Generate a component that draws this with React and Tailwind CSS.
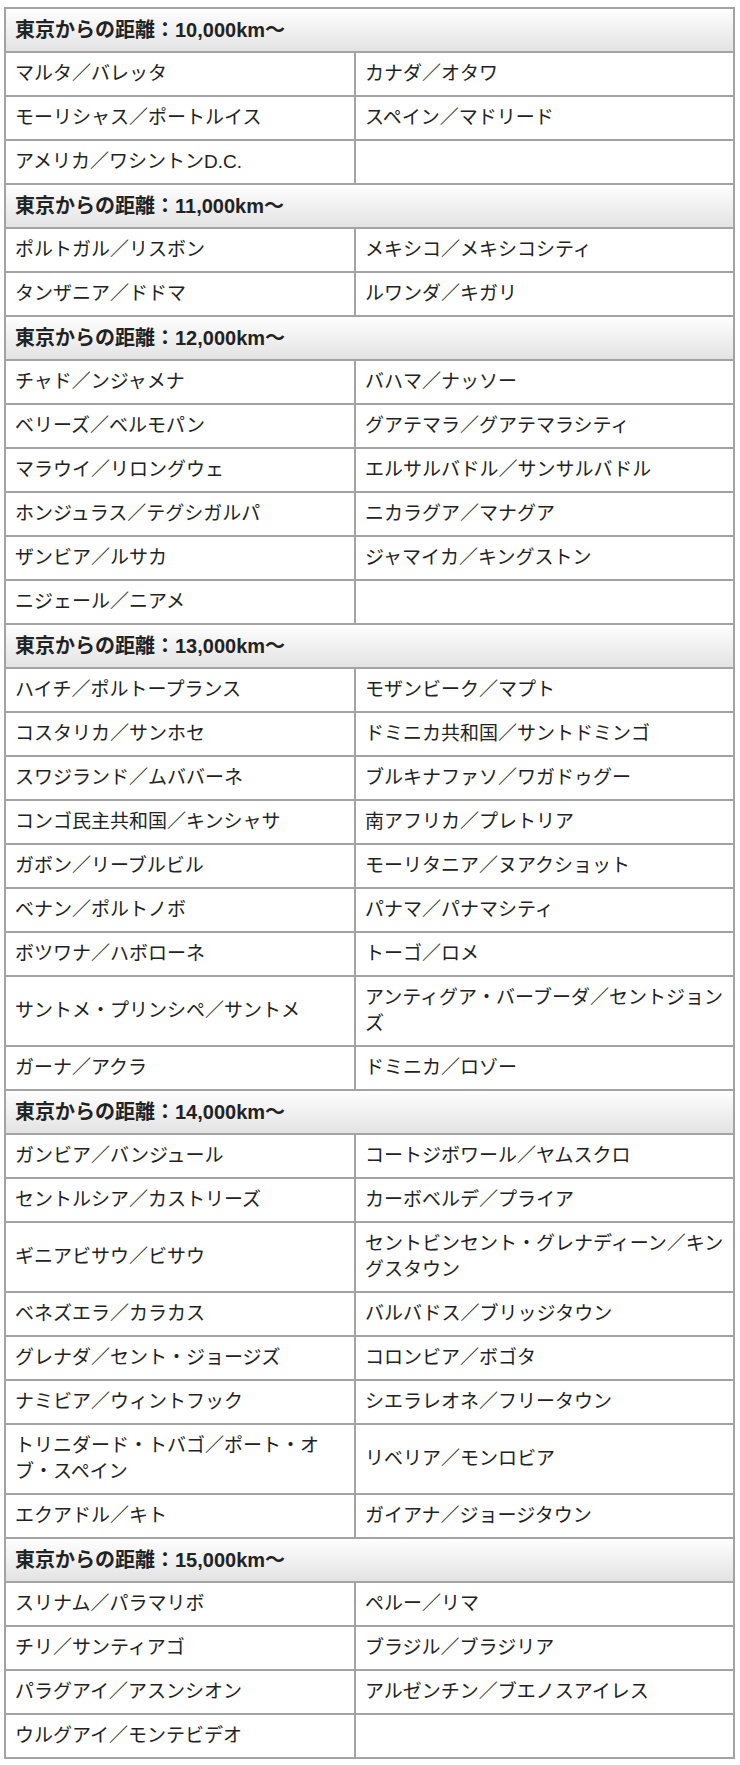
import React from 'react';

const sections = [
  {
    title: '東京からの距離：10,000km〜',
    rows: [
      ['マルタ／バレッタ', 'カナダ／オタワ'],
      ['モーリシャス／ポートルイス', 'スペイン／マドリード'],
      ['アメリカ／ワシントンD.C.', ''],
    ],
  },
  {
    title: '東京からの距離：11,000km〜',
    rows: [
      ['ポルトガル／リスボン', 'メキシコ／メキシコシティ'],
      ['タンザニア／ドドマ', 'ルワンダ／キガリ'],
    ],
  },
  {
    title: '東京からの距離：12,000km〜',
    rows: [
      ['チャド／ンジャメナ', 'バハマ／ナッソー'],
      ['ベリーズ／ベルモパン', 'グアテマラ／グアテマラシティ'],
      ['マラウイ／リロングウェ', 'エルサルバドル／サンサルバドル'],
      ['ホンジュラス／テグシガルパ', 'ニカラグア／マナグア'],
      ['ザンビア／ルサカ', 'ジャマイカ／キングストン'],
      ['ニジェール／ニアメ', ''],
    ],
  },
  {
    title: '東京からの距離：13,000km〜',
    rows: [
      ['ハイチ／ポルトープランス', 'モザンビーク／マプト'],
      ['コスタリカ／サンホセ', 'ドミニカ共和国／サントドミンゴ'],
      ['スワジランド／ムババーネ', 'ブルキナファソ／ワガドゥグー'],
      ['コンゴ民主共和国／キンシャサ', '南アフリカ／プレトリア'],
      ['ガボン／リーブルビル', 'モーリタニア／ヌアクショット'],
      ['ベナン／ポルトノボ', 'パナマ／パナマシティ'],
      ['ボツワナ／ハボローネ', 'トーゴ／ロメ'],
      ['サントメ・プリンシペ／サントメ', 'アンティグア・バーブーダ／セントジョンズ'],
      ['ガーナ／アクラ', 'ドミニカ／ロゾー'],
    ],
  },
  {
    title: '東京からの距離：14,000km〜',
    rows: [
      ['ガンビア／バンジュール', 'コートジボワール／ヤムスクロ'],
      ['セントルシア／カストリーズ', 'カーボベルデ／プライア'],
      ['ギニアビサウ／ビサウ', 'セントビンセント・グレナディーン／キングスタウン'],
      ['ベネズエラ／カラカス', 'バルバドス／ブリッジタウン'],
      ['グレナダ／セント・ジョージズ', 'コロンビア／ボゴタ'],
      ['ナミビア／ウィントフック', 'シエラレオネ／フリータウン'],
      ['トリニダード・トバゴ／ポート・オブ・スペイン', 'リベリア／モンロビア'],
      ['エクアドル／キト', 'ガイアナ／ジョージタウン'],
    ],
  },
  {
    title: '東京からの距離：15,000km〜',
    rows: [
      ['スリナム／パラマリボ', 'ペルー／リマ'],
      ['チリ／サンティアゴ', 'ブラジル／ブラジリア'],
      ['パラグアイ／アスンシオン', 'アルゼンチン／ブエノスアイレス'],
      ['ウルグアイ／モンテビデオ', ''],
    ],
  },
];

const App = () => {
  return (
    <div className="bg-white min-h-[1765px] pt-[7px] pl-[4px] font-['Liberation_Sans','Noto_Sans_CJK_JP',sans-serif] text-[#222]">
      <table className="w-[731px] table-fixed border-collapse border-2 border-[#a3a3a3] text-[19px] leading-[26px]">
        <colgroup>
          <col className="w-[350px]" />
          <col />
        </colgroup>
        <tbody>
          {sections.map((section) => (
            <React.Fragment key={section.title}>
              <tr>
                <th
                  colSpan={2}
                  className="border-2 border-[#a3a3a3] bg-gradient-to-b from-[#fefefe] to-[#e3e3e3] pl-[9px] pr-[6px] py-[8px] text-left text-[20px] font-bold"
                >
                  {section.title}
                </th>
              </tr>
              {section.rows.map(([left, right]) => (
                <tr key={left}>
                  <td className="border-2 border-[#a3a3a3] pl-[9px] pr-[6px] py-[8px] align-middle">{left}</td>
                  <td className="border-2 border-[#a3a3a3] pl-[9px] pr-[6px] py-[8px] align-middle">{right}</td>
                </tr>
              ))}
            </React.Fragment>
          ))}
        </tbody>
      </table>
    </div>
  );
};

export default App;
